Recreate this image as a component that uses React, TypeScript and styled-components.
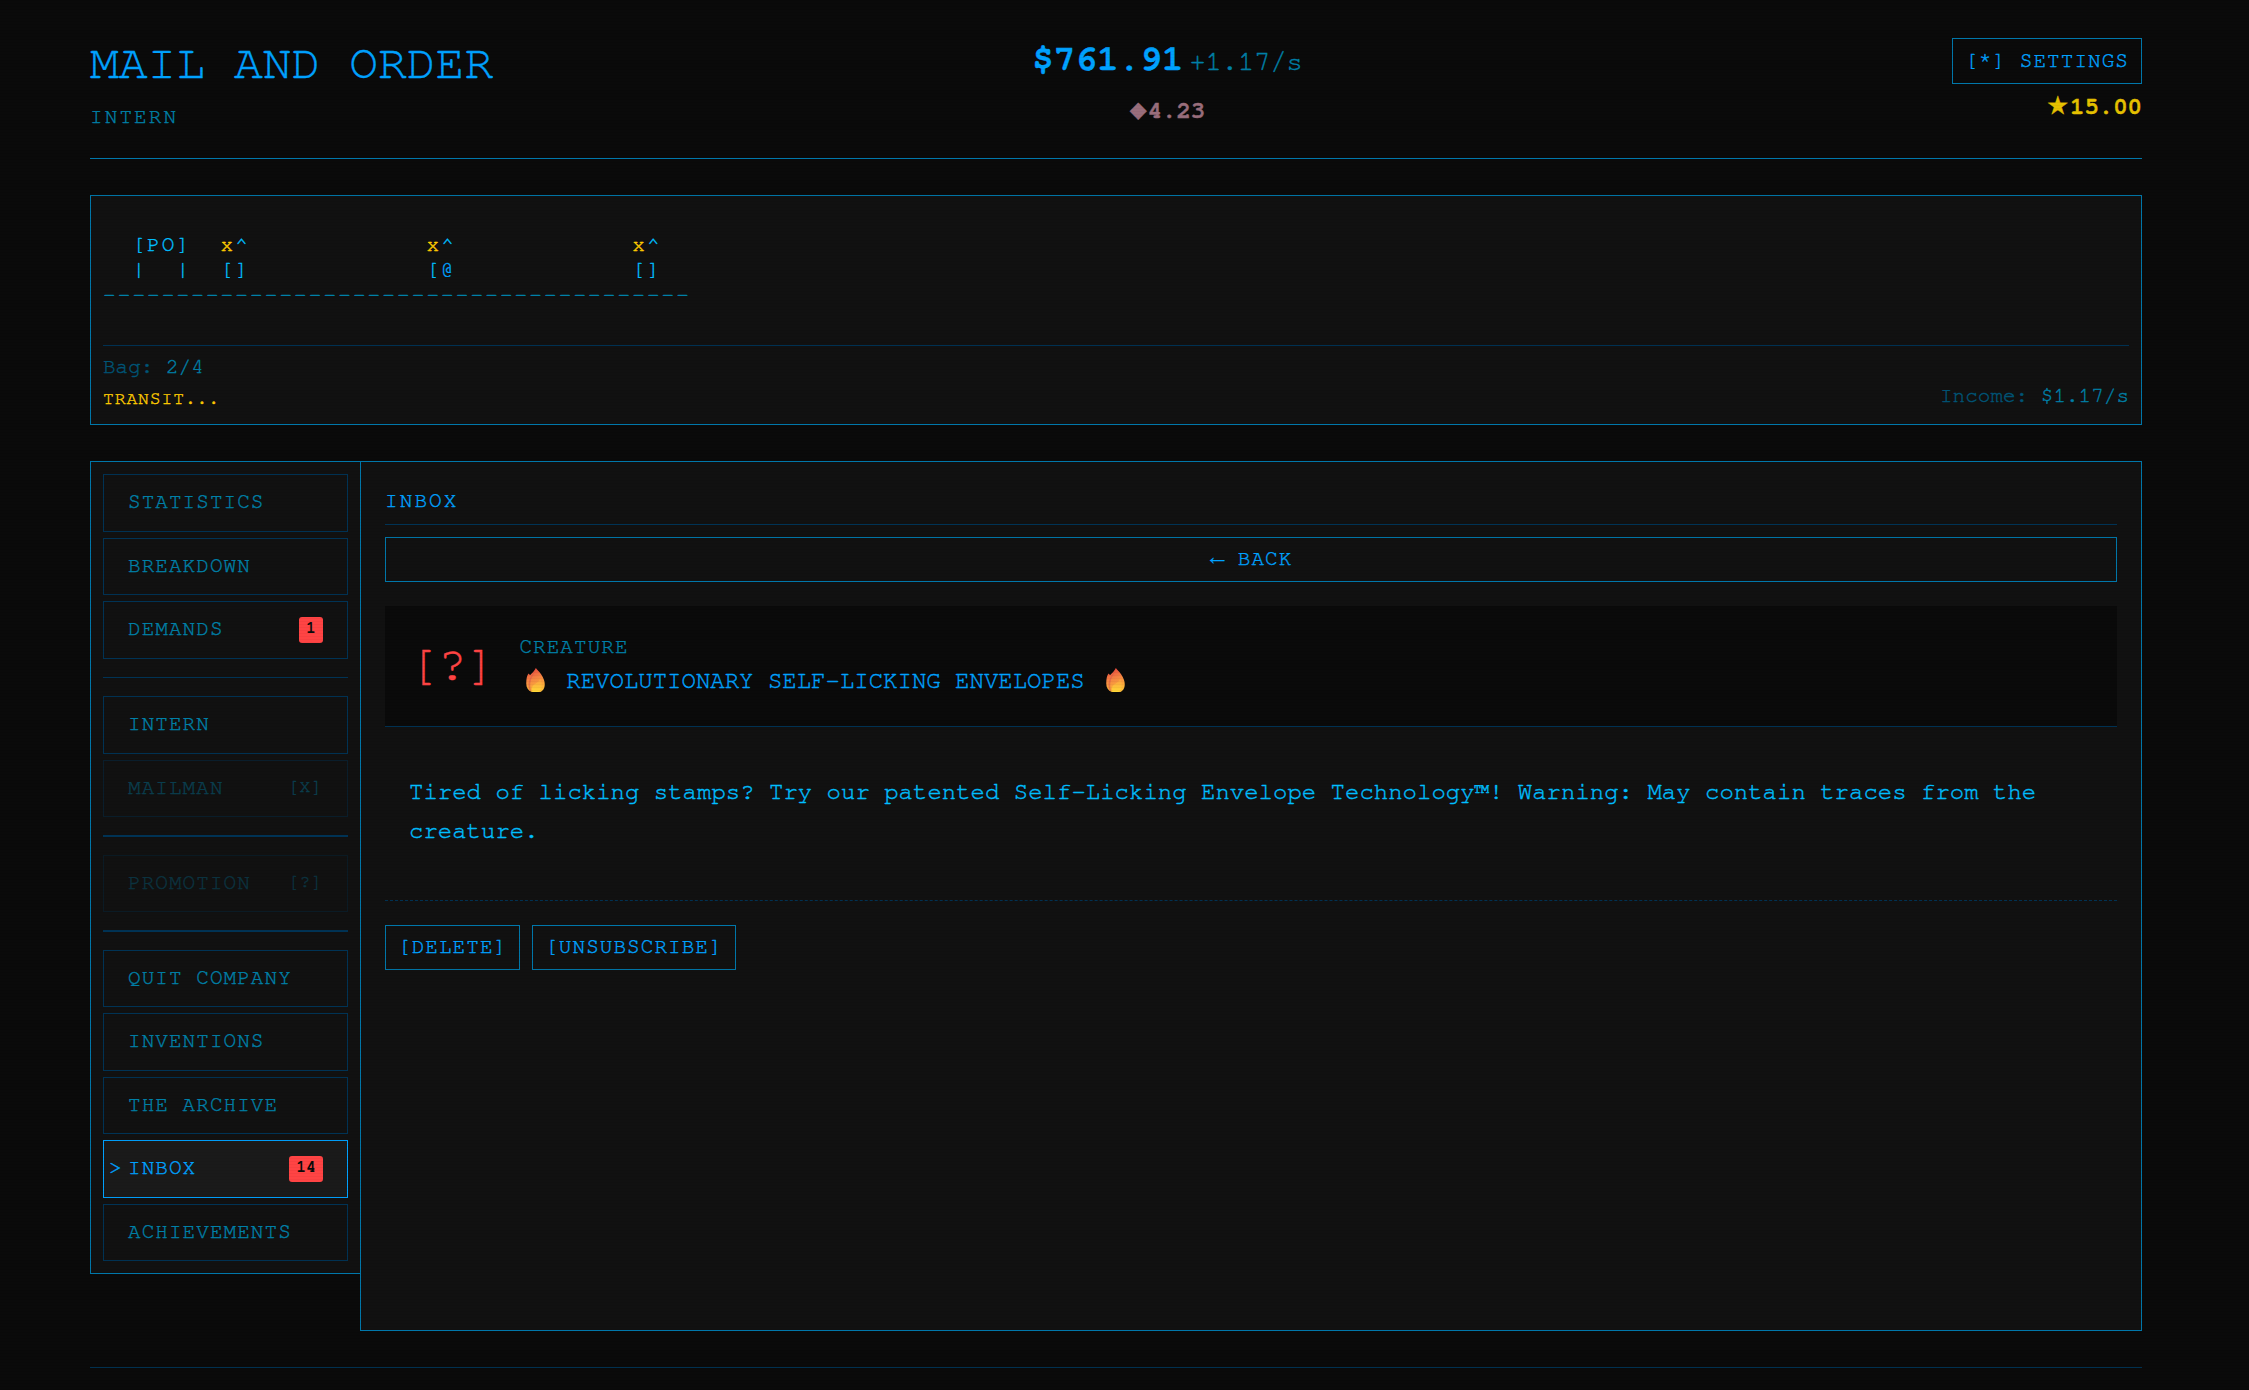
import React from 'react';
import styled, { createGlobalStyle } from 'styled-components';

const Global = createGlobalStyle`
  *, *::before, *::after { box-sizing: border-box; }
  html { background: #0a0a0a; }
  body {
    margin: 0;
    background: #0a0a0a;
    color: #00bfff;
    font-family: "FreeMono", "Nimbus Mono PS", "TeX Gyre Cursor", "Courier Prime", "Liberation Mono", monospace;
    -webkit-text-stroke: 0.4px currentColor;
    height: 1390px;
    overflow: hidden;
  }
`;

const Scanlines = styled.div`
  position: fixed;
  inset: 0;
  pointer-events: none;
  background: repeating-linear-gradient(0deg, rgba(0, 0, 0, 0.03) 0, rgba(0, 0, 0, 0.03) 1px, transparent 1px, transparent 3px);
`;

const Page = styled.div`
  width: 2052px;
  margin-left: 90px;
  padding-top: 36px;
`;

const Header = styled.header`
  display: grid;
  grid-template-columns: 1fr auto 1fr;
  height: 123px;
  border-bottom: 1px solid #0077aa;
`;

const Brand = styled.div`
  padding-top: 8px;
`;

const Title = styled.h1`
  margin: 0;
  font-size: 48px;
  font-weight: 400;
  line-height: 40px;
  color: #00a2ff;
  white-space: pre;
`;

const Rank = styled.div`
  margin-top: 22px;
  font-size: 21px;
  line-height: 22px;
  letter-spacing: 2.1px;
  color: #0080a8;
`;

const Money = styled.div`
  display: flex;
  flex-direction: column;
  align-items: center;
  padding-left: 103px;
`;

const Cash = styled.div`
  display: flex;
  align-items: baseline;
  gap: 6px;
  height: 48px;
  line-height: 46px;
  color: #00a2ff;
  font-size: 36px;
  font-weight: 700;
`;

const Rate = styled.span`
  font-size: 27px;
  font-weight: 400;
  color: #0080a8;
`;

const Gems = styled.div`
  display: flex;
  align-items: center;
  height: 30px;
  margin-top: 12px;
  font-size: 24px;
  font-weight: 700;
  color: #996e7c;
`;

const Symbol = styled.span<{ $size: number }>`
  font-family: "DejaVu Sans", sans-serif;
  font-size: ${(p) => p.$size}px;
  line-height: 30px;
  margin: -3px 1px 0 0;
`;

const Corner = styled.div`
  display: flex;
  flex-direction: column;
  align-items: flex-end;
  padding-top: 2px;
`;

const Button = styled.button<{ $wide?: boolean; $tall?: boolean }>`
  display: flex;
  align-items: center;
  justify-content: center;
  width: ${(p) => (p.$wide ? '100%' : 'auto')};
  height: ${(p) => (p.$tall ? 46 : 45)}px;
  padding: 0 12px 2px;
  border: 1px solid #0077aa;
  background: transparent;
  color: #00a2ff;
  font-family: inherit;
  font-size: 21px;
  letter-spacing: 1.05px;
  white-space: pre;
  -webkit-text-stroke: inherit;
`;

const Arrow = styled.span`
  display: inline-block;
  width: 14.5px;
  font-family: "Liberation Mono", monospace;
  font-size: 25px;
  letter-spacing: 0;
  line-height: 20px;
  -webkit-text-stroke: 0;
`;

const Stars = styled.div`
  display: flex;
  align-items: center;
  height: 30px;
  margin-top: 8px;
  font-size: 24px;
  font-weight: 700;
  color: #e6c200;
`;

const Route = styled.section`
  height: 230px;
  margin-top: 36px;
  padding: 36px 12px 0;
  border: 1px solid #0077aa;
  background: #111;
`;

const Street = styled.pre`
  margin: 0;
  height: 113px;
  font-family: inherit;
  font-size: 21px;
  letter-spacing: 2.1px;
  line-height: 25px;
  color: #00bfff;
`;

const Tone = styled.span<{ $c: string }>`
  color: ${(p) => p.$c};
  -webkit-text-stroke-color: ${(p) => p.$c};
`;

const RouteFooter = styled.div`
  display: flex;
  justify-content: space-between;
  align-items: center;
  padding-top: 5px;
  border-top: 1px solid #003355;
  font-size: 21px;
  color: #0080a8;
`;

const Line = styled.div<{ $small?: boolean }>`
  height: 32px;
  line-height: 32px;
  font-size: ${(p) => (p.$small ? 18 : 21)}px;
  letter-spacing: ${(p) => (p.$small ? 0.9 : 0)}px;
  color: ${(p) => (p.$small ? '#ffcc00' : 'inherit')};
`;

const Income = styled.div`
  padding-top: 24px;
`;

const Main = styled.main`
  display: flex;
  align-items: flex-start;
  margin-top: 36px;
`;

const Sidebar = styled.nav`
  display: flex;
  flex-direction: column;
  gap: 6px;
  width: 270px;
  height: 813px;
  padding: 12px 12px 0;
  border: 1px solid #0077aa;
  border-right: 0;
  background: #111;
`;

const NavItem = styled.div<{ $active?: boolean; $faint?: number }>`
  position: relative;
  display: flex;
  align-items: center;
  justify-content: space-between;
  flex: none;
  height: 57.5px;
  padding: 0 24px 2px;
  border: 1px solid ${(p) => (p.$active ? '#00a2ff' : '#003355')};
  background: ${(p) => (p.$active ? '#1a1a1a' : 'transparent')};
  color: ${(p) => (p.$active ? '#00a2ff' : '#0080a8')};
  opacity: ${(p) => p.$faint ?? 1};
  font-size: 21px;
  letter-spacing: 1.05px;
`;

const Marker = styled.span`
  position: absolute;
  left: 5px;
`;

const Lock = styled.span`
  font-size: 18px;
  letter-spacing: 0.9px;
`;

const Badge = styled.span`
  height: 26px;
  margin-top: 2px;
  padding: 0 7px;
  border-radius: 3px;
  background: #ff4444;
  color: #0a0a0a;
  font-size: 16.5px;
  font-weight: 700;
  line-height: 23px;
  letter-spacing: 0;
  -webkit-text-stroke: 0;
`;

const Divider = styled.div`
  flex: none;
  height: 1.5px;
  margin: 12px 0;
  background: #003355;
`;

const Panel = styled.section`
  width: 1782px;
  height: 870px;
  padding: 24px 24px 0;
  border: 1px solid #0077aa;
  background: #111;
`;

const PanelTitle = styled.h2`
  margin: 0 0 12px;
  height: 39px;
  border-bottom: 1px solid #003355;
  font-size: 21px;
  font-weight: 400;
  line-height: 29px;
  letter-spacing: 2.1px;
  color: #00a2ff;
`;

const Mail = styled.div`
  display: flex;
  align-items: center;
  gap: 24px;
  height: 121px;
  margin-top: 24px;
  padding: 0 0 2px 24px;
  border-bottom: 1px solid #003355;
  background: #0a0a0a;
`;

const Glyph = styled.div`
  font-size: 48px;
  color: #ff4444;
`;

const Sender = styled.div`
  font-size: 21px;
  line-height: 32px;
  letter-spacing: 1.05px;
  color: #0080a8;
`;

const Subject = styled.div`
  display: flex;
  align-items: center;
  height: 36px;
  font-size: 24px;
  color: #00a2ff;
  white-space: pre;
`;

const Flame = styled.svg`
  flex: none;
  width: 32.5px;
  height: 26px;
  margin-top: -3px;
`;

const Body = styled.p`
  margin: 0;
  height: 174px;
  padding: 46px 24px 0;
  border-bottom: 1px dashed #003355;
  font-size: 24px;
  line-height: 39px;
`;

const Actions = styled.div`
  display: flex;
  gap: 12px;
  margin-top: 24px;
`;

const FootRule = styled.div`
  height: 1px;
  margin-top: 36px;
  background: #00304f;
`;

const DIM = '#005577';
const MID = '#0080a8';
const YEL = '#ffcc00';
const BRIGHT = '#00a2ff';

type Item = { label: string; badge?: string; lock?: string; active?: boolean; faint?: number };

const groups: Item[][] = [
  [{ label: 'STATISTICS' }, { label: 'BREAKDOWN' }, { label: 'DEMANDS', badge: '1' }],
  [{ label: 'INTERN' }, { label: 'MAILMAN', lock: '[X]', faint: 0.4 }],
  [{ label: 'PROMOTION', lock: '[?]', faint: 0.3 }],
  [
    { label: 'QUIT COMPANY' },
    { label: 'INVENTIONS' },
    { label: 'THE ARCHIVE' },
    { label: 'INBOX', badge: '14', active: true },
    { label: 'ACHIEVEMENTS' },
  ],
];

const gap = ' '.repeat(12);

function Fire({ id }: { id: string }) {
  return (
    <Flame viewBox="0 0 32 26" role="img" aria-label="fire">
      <defs>
        <linearGradient id={id} x1="0" y1="0" x2="0.25" y2="1">
          <stop offset="0" stopColor="#e8383b" />
          <stop offset="0.5" stopColor="#f58344" />
          <stop offset="1" stopColor="#fdbb38" />
        </linearGradient>
        <linearGradient id={id + 'core'} x1="0" y1="0" x2="0" y2="1">
          <stop offset="0" stopColor="#fb9a42" />
          <stop offset="1" stopColor="#ffd936" />
        </linearGradient>
      </defs>
      <path
        d="M16.600 1c1.500 2.200 3.500 3.600 5.400 6.500 2.200 3.400 3.500 6.500 3.500 9.700 0 4.200-2 7-4.700 7.800h-8.200C8.900 23.400 7 20.600 7 16.700c0-4.100.4-7.700 2.300-10.200.5.800 1.100 1.300 1.700 1.400C12.700 6.200 15.300 3.900 16.600 1z"
        fill={`url(#${id})`}
      />
      <path d="M10.400 24c-2-4.700-1.500-10 1.200-14.500 1.600-2.600 3.400-4.600 4.400-6.500-.5 3.600-3.300 6-4.300 9.700-1.100 4-1 7.800.3 11.300z" fill="#d9574c" opacity="0.55" />
      <path d="M20.800 11.500c2.700 4.700 2.200 10.800-1.500 13.500h-5.600c-1.900-3.300-1-6.500 2.500-8.300 2.600-1.400 4.100-2.900 4.600-5.200z" fill={`url(#${id}core)`} />
    </Flame>
  );
}

export default function App() {
  return (
    <>
      <Global />
      <Page>
        <Header>
          <Brand>
            <Title>MAIL AND ORDER</Title>
            <Rank>INTERN</Rank>
          </Brand>
          <Money>
            <Cash>
              <span>$761.91</span>
              <Rate>+1.17/s</Rate>
            </Cash>
            <Gems><Symbol $size={22}>◆</Symbol>4.23</Gems>
          </Money>
          <Corner>
            <Button $tall>[*] SETTINGS</Button>
            <Stars><Symbol $size={25}>★</Symbol>15.00</Stars>
          </Corner>
        </Header>

        <Route>
          <Street>
            {'  [PO]  '}
            <Tone $c={YEL}>x</Tone>{'^' + gap}
            <Tone $c={YEL}>x</Tone>{'^' + gap}
            <Tone $c={YEL}>x</Tone>{'^\n'}
            {'  |  |  []' + gap + '['}
            <Tone $c={BRIGHT}>@</Tone>
            {gap + '[]\n'}
            <Tone $c={MID}>{'-'.repeat(40)}</Tone>
          </Street>
          <RouteFooter>
            <div>
              <Line><Tone $c={DIM}>Bag:</Tone> 2/4</Line>
              <Line $small>TRANSIT...</Line>
            </div>
            <Income><Tone $c={DIM}>Income:</Tone> $1.17/s</Income>
          </RouteFooter>
        </Route>

        <Main>
          <Sidebar>
            {groups.map((items, i) => (
              <React.Fragment key={i}>
                {i > 0 && <Divider />}
                {items.map((it) => (
                  <NavItem key={it.label} $active={it.active} $faint={it.faint}>
                    {it.active && <Marker>&gt;</Marker>}
                    {it.label}
                    {it.badge && <Badge>{it.badge}</Badge>}
                    {it.lock && <Lock>{it.lock}</Lock>}
                  </NavItem>
                ))}
              </React.Fragment>
            ))}
          </Sidebar>
          <Panel>
            <PanelTitle>INBOX</PanelTitle>
            <Button $wide><Arrow>←</Arrow>{' BACK'}</Button>
            <Mail>
              <Glyph>[?]</Glyph>
              <div>
                <Sender>CREATURE</Sender>
                <Subject>
                  <Fire id="flame-left" />
                  <span>{' REVOLUTIONARY SELF-LICKING ENVELOPES '}</span>
                  <Fire id="flame-right" />
                </Subject>
              </div>
            </Mail>
            <Body>
              Tired of licking stamps? Try our patented Self-Licking Envelope Technology™! Warning: May contain
              traces from the creature.
            </Body>
            <Actions>
              <Button>[DELETE]</Button>
              <Button>[UNSUBSCRIBE]</Button>
            </Actions>
          </Panel>
        </Main>
        <FootRule />
      </Page>
      <Scanlines />
    </>
  );
}
